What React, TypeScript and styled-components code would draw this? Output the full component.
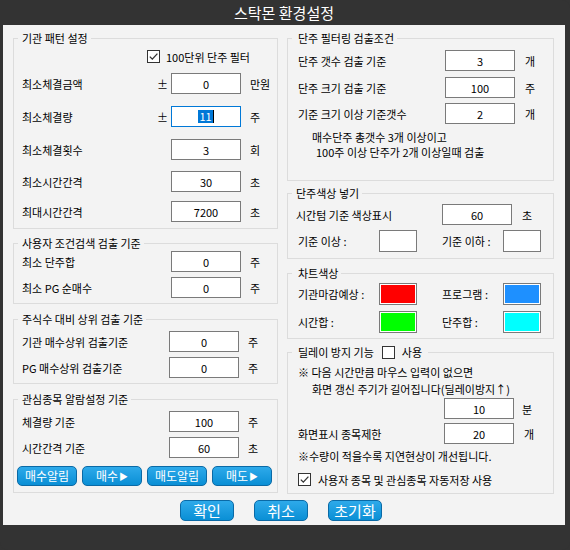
import React from 'react';
import styled, { createGlobalStyle } from 'styled-components';

const FONT = `'Noto Sans CJK KR', 'Noto Sans', sans-serif`;
const PANEL = '#f3f3f3';
const FRAME = '#333333';
const LINE = '#dcdcdc';
const FIELD_BORDER = '#7a7a7a';

const GlobalStyle = createGlobalStyle`
  html, body {
    margin: 0;
    padding: 0;
    background: ${FRAME};
  }
  body {
    font-family: ${FONT};
    font-size: 11px;
    color: #000;
  }
`;

interface GroupProps {
  title: React.ReactNode;
  h: number;
  mt?: number;
  pl?: number;
  children?: React.ReactNode;
}

const GroupBox = (props: GroupProps) => {
  const { title, h, mt = 0, pl = 8, children } = props;
  return (
    <Group $h={h} $mt={mt} $pl={pl}>
      <Legend $pl={pl - 4}>{title}</Legend>
      {children}
    </Group>
  );
};

const CheckBox = ({ checked }: { checked?: boolean }) => (
  <Box>
    {checked && (
      <svg width="11" height="11" viewBox="0 0 11 11">
        <path d="M1.8 5.6 L4.3 8.1 L9.4 2.6" fill="none" stroke="#333" strokeWidth="1.3" />
      </svg>
    )}
  </Box>
);

const patternRows = [
  { label: '최소체결금액', pm: true, value: '0', unit: '만원', mt: 6 },
  { label: '최소체결량', pm: true, value: '11', unit: '주', mt: 12, focus: true },
  { label: '최소체결횟수', value: '3', unit: '회', mt: 12 },
  { label: '최소시간간격', value: '30', unit: '초', mt: 11 },
  { label: '최대시간간격', value: '7200', unit: '초', mt: 9 },
];

const App = () => {
  return (
    <>
      <GlobalStyle />
      <Frame>
        <TitleBar>스탁몬 환경설정</TitleBar>
        <Body>
          <Columns>
            <Column>
              <GroupBox title="기관 패턴 설정" h={191}>
                <CheckRow $mt={7} $pl={125} $gap={6}>
                  <CheckBox checked />
                  <span>100단위 단주 필터</span>
                </CheckRow>
                {patternRows.map((row) => (
                  <Row key={row.label} $cols="135px 14px 70px auto" $mt={row.mt}>
                    <span>{row.label}</span>
                    <span>{row.pm ? '±' : ''}</span>
                    <Field $focus={row.focus}>
                      {row.focus ? (
                        <>
                          <Selected>{row.value}</Selected>
                          <Caret />
                        </>
                      ) : (
                        row.value
                      )}
                    </Field>
                    <Unit>{row.unit}</Unit>
                  </Row>
                ))}
              </GroupBox>

              <GroupBox title="사용자 조건검색 검출 기준" h={61} mt={14}>
                <Row $cols="149px 70px auto" $mt={7}>
                  <span>최소 단주합</span>
                  <Field>0</Field>
                  <Unit>주</Unit>
                </Row>
                <Row $cols="149px 70px auto" $mt={5}>
                  <span>최소 PG 순매수</span>
                  <Field>0</Field>
                  <Unit>주</Unit>
                </Row>
              </GroupBox>

              <GroupBox title="주식수 대비 상위 검출 기준" h={65} mt={15}>
                <Row $cols="147px 70px auto" $mt={11}>
                  <span>기관 매수상위 검출기준</span>
                  <Field>0</Field>
                  <Unit>주</Unit>
                </Row>
                <Row $cols="147px 70px auto" $mt={5}>
                  <span>PG 매수상위 검출기준</span>
                  <Field>0</Field>
                  <Unit>주</Unit>
                </Row>
              </GroupBox>

              <GroupBox title="관심종목 알람설정 기준" h={94} mt={15}>
                <Row $cols="147px 70px auto" $mt={11}>
                  <span>체결량 기준</span>
                  <Field>100</Field>
                  <Unit>주</Unit>
                </Row>
                <Row $cols="147px 70px auto" $mt={5}>
                  <span>시간간격 기준</span>
                  <Field>60</Field>
                  <Unit>초</Unit>
                </Row>
                <AlarmButtons>
                  <BlueButton $w={60} $h={20} $fs={12}>매수알림</BlueButton>
                  <BlueButton $w={60} $h={20} $fs={12}>
                    매수<Arrow>▶</Arrow>
                  </BlueButton>
                  <BlueButton $w={60} $h={20} $fs={12}>매도알림</BlueButton>
                  <BlueButton $w={60} $h={20} $fs={12}>
                    매도<Arrow>▶</Arrow>
                  </BlueButton>
                </AlarmButtons>
              </GroupBox>
            </Column>

            <Column>
              <GroupBox title="단주 필터링 검출조건" h={143} pl={10}>
                <Row $cols="147px 70px auto" $mt={11}>
                  <span>단주 갯수 검출 기준</span>
                  <Field>3</Field>
                  <Unit $pl={10}>개</Unit>
                </Row>
                <Row $cols="147px 70px auto" $mt={6}>
                  <span>단주 크기 검출 기준</span>
                  <Field>100</Field>
                  <Unit $pl={10}>주</Unit>
                </Row>
                <Row $cols="147px 70px auto" $mt={5}>
                  <span>기준 크기 이상 기준갯수</span>
                  <Field>2</Field>
                  <Unit $pl={10}>개</Unit>
                </Row>
                <Note $mt={6} $pl={14} $h={15}>매수단주 총갯수 3개 이상이고</Note>
                <Note $pl={18} $h={15}>100주 이상 단주가 2개 이상일때 검출</Note>
              </GroupBox>

              <GroupBox title="단주색상 넣기" h={66} mt={12}>
                <Row $cols="146px 70px auto" $mt={10}>
                  <span>시간텀 기준 색상표시</span>
                  <Field>60</Field>
                  <Unit $pl={10}>초</Unit>
                </Row>
                <Row $cols="83px 38px 25px 61px 38px" $mt={5} $h={22}>
                  <Indent>기준 이상 :</Indent>
                  <Swatch />
                  <span />
                  <span>기준 이하 :</span>
                  <Swatch />
                </Row>
              </GroupBox>

              <GroupBox title="차트색상" h={66} mt={14} pl={10}>
                <Row $cols="81px 38px 25px 61px 38px" $mt={9} $h={22}>
                  <span>기관마감예상 :</span>
                  <Swatch $color="#ff0000" />
                  <span />
                  <span>프로그램 :</span>
                  <Swatch $color="#1e90ff" />
                </Row>
                <Row $cols="81px 38px 25px 61px 38px" $mt={6} $h={22}>
                  <span>시간합 :</span>
                  <Swatch $color="#00ff00" />
                  <span />
                  <span>단주합 :</span>
                  <Swatch $color="#00ffff" />
                </Row>
              </GroupBox>

              <GroupBox
                title={
                  <LegendInner>
                    <span>딜레이 방지 기능</span>
                    <CheckBox />
                    <span>사용</span>
                  </LegendInner>
                }
                h={142}
                mt={13}
                pl={10}
              >
                <Note $mt={11} $h={17}>※ 다음 시간만큼 마우스 입력이 없으면</Note>
                <Note $pl={14} $h={17}>화면 갱신 주기가 길어집니다(딜레이방지↑)</Note>
                <Row $cols="146px 70px auto">
                  <span />
                  <Field>10</Field>
                  <Unit $pl={8}>분</Unit>
                </Row>
                <Row $cols="146px 70px auto" $mt={4}>
                  <span>화면표시 종목제한</span>
                  <Field>20</Field>
                  <Unit $pl={10}>개</Unit>
                </Row>
                <Note $mt={4} $h={17}>※수량이 적을수록 지연현상이 개선됩니다.</Note>
                <CheckRow $mt={4} $gap={7}>
                  <CheckBox checked />
                  <span>사용자 종목 및 관심종목 자동저장 사용</span>
                </CheckRow>
              </GroupBox>
            </Column>
          </Columns>

          <Footer>
            <BlueButton $w={54} $h={21} $fs={15}>확인</BlueButton>
            <BlueButton $w={54} $h={21} $fs={15}>취소</BlueButton>
            <BlueButton $w={54} $h={21} $fs={15}>초기화</BlueButton>
          </Footer>
        </Body>
      </Frame>
    </>
  );
};

export default App;

const Frame = styled.div`
  display: flex;
  flex-direction: column;
  width: 570px;
  height: 550px;
  background: ${FRAME};
  border-radius: 0 8px 8px 8px;
  overflow: hidden;
`;

const TitleBar = styled.div`
  display: flex;
  align-items: center;
  justify-content: center;
  height: 25px;
  padding-right: 2px;
  color: #fff;
  font-size: 15px;
  line-height: 25px;
`;

const Body = styled.div`
  display: flex;
  flex-direction: column;
  height: 500px;
  margin: 0 5px 0 3px;
  background: ${PANEL};
`;

const Columns = styled.div`
  display: flex;
  gap: 9px;
  padding: 13px 0 0 10px;
`;

const Column = styled.div`
  display: flex;
  flex-direction: column;
  width: 265px;

  & + & {
    width: 267px;
  }
`;

const Group = styled.div<{ $h: number; $mt: number; $pl: number }>`
  position: relative;
  box-sizing: border-box;
  display: flex;
  flex-direction: column;
  height: ${(p) => p.$h}px;
  margin-top: ${(p) => p.$mt}px;
  padding-left: ${(p) => p.$pl}px;
  border: 1px solid ${LINE};
`;

const Legend = styled.div<{ $pl: number }>`
  position: absolute;
  top: -9px;
  left: 4px;
  padding: 0 3px 0 ${(p) => p.$pl}px;
  background: ${PANEL};
  line-height: 16px;
  white-space: nowrap;
`;

const LegendInner = styled.div`
  display: flex;
  align-items: center;
  gap: 7px;
  padding-right: 3px;

  & > span:first-child {
    margin-right: 1px;
  }
`;

const Row = styled.div<{ $cols: string; $mt?: number; $h?: number }>`
  display: grid;
  grid-template-columns: ${(p) => p.$cols};
  align-items: center;
  height: ${(p) => p.$h ?? 21}px;
  margin-top: ${(p) => p.$mt ?? 0}px;
  white-space: nowrap;
`;

const Indent = styled.span`
  padding-left: 2px;
`;

const Field = styled.div<{ $focus?: boolean }>`
  box-sizing: border-box;
  display: flex;
  align-items: center;
  justify-content: center;
  width: 70px;
  height: 21px;
  background: #fff;
  border: 1px solid ${(p) => (p.$focus ? '#0078d7' : FIELD_BORDER)};
  font-size: 11px;
`;

const Selected = styled.span`
  padding: 0 1px;
  background: #0078d7;
  color: #fff;
  line-height: 13px;
`;

const Caret = styled.span`
  width: 1px;
  height: 13px;
  background: #000;
`;

const Unit = styled.span<{ $pl?: number }>`
  padding-left: ${(p) => p.$pl ?? 9}px;
`;

const Note = styled.div<{ $mt?: number; $pl?: number; $h: number }>`
  height: ${(p) => p.$h}px;
  margin-top: ${(p) => p.$mt ?? 0}px;
  padding-left: ${(p) => p.$pl ?? 0}px;
  line-height: ${(p) => p.$h}px;
  white-space: nowrap;
`;

const CheckRow = styled.div<{ $mt: number; $pl?: number; $gap: number }>`
  display: flex;
  align-items: center;
  gap: ${(p) => p.$gap}px;
  height: 21px;
  margin-top: ${(p) => p.$mt}px;
  padding-left: ${(p) => p.$pl ?? 0}px;
  white-space: nowrap;
`;

const Box = styled.span`
  box-sizing: border-box;
  display: flex;
  align-items: center;
  justify-content: center;
  flex: none;
  width: 13px;
  height: 13px;
  background: #fff;
  border: 1px solid #333;
`;

const Swatch = styled.div<{ $color?: string }>`
  box-sizing: border-box;
  width: 38px;
  height: 22px;
  background: ${(p) => p.$color ?? '#fff'};
  border: 1px solid ${FIELD_BORDER};
  box-shadow: ${(p) => (p.$color ? 'inset 0 0 0 1px #fff' : 'none')};
`;

const AlarmButtons = styled.div`
  display: flex;
  gap: 5px;
  margin: 8px 0 0 -5px;
`;

const BlueButton = styled.button<{ $w: number; $h: number; $fs: number }>`
  box-sizing: border-box;
  display: flex;
  align-items: center;
  justify-content: center;
  width: ${(p) => p.$w}px;
  height: ${(p) => p.$h}px;
  padding: 0;
  background: linear-gradient(#2eaaea, #0a8fd5);
  border: 1px solid #0a6aa6;
  border-radius: 5px;
  color: #fff;
  font-family: ${FONT};
  font-size: ${(p) => p.$fs}px;
  line-height: 1;
  white-space: nowrap;
`;

const Arrow = styled.span`
  margin-left: 1px;
  font-size: 9px;
`;

const Footer = styled.div`
  display: flex;
  justify-content: center;
  gap: 20px;
  margin-top: 6px;
  padding-right: 6px;
`;
